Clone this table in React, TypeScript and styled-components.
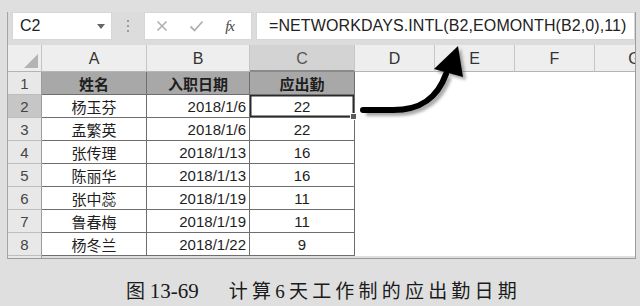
import React from "react";
import styled, { createGlobalStyle } from "styled-components";

const Global = createGlobalStyle`
  html, body { margin: 0; padding: 0; background: #dfdfdf; }
  body { font-family: "Liberation Sans", "Noto Sans CJK SC", sans-serif; }
`;

const Page = styled.div`
  position: relative;
  width: 640px;
  height: 306px;
  box-sizing: border-box;
  padding: 12px 0 0 7px;
  background: #dfdfdf;
  overflow: hidden;
`;

const Panel = styled.div`
  width: 629px;
  box-sizing: border-box;
  border-left: 1px solid #a4a4a4;
  border-right: 1px solid #9c9c9c;
  border-bottom: 1px solid #9a9a9a;
  display: flex;
  flex-direction: column;
  background: #dcdcdc;
`;

const FormulaBar = styled.div`
  display: flex;
  height: 28px;
  padding-left: 4px;
`;

const Box = styled.div<{ $w?: number }>`
  position: relative;
  background: #fff;
  border: 1px solid #d6d6d6;
  box-sizing: border-box;
  display: flex;
  align-items: center;
  ${(p) => (p.$w ? `width: ${p.$w}px;` : "flex: 1; margin-left: 4px;")}
`;

const NameText = styled.span`
  font-size: 16px;
  color: #222;
  padding-left: 7px;
  flex: 1;
`;

const Caret = styled.span`
  width: 0;
  height: 0;
  border-left: 4px solid transparent;
  border-right: 4px solid transparent;
  border-top: 5px solid #666;
  margin-right: 6px;
`;

const Dots = styled.div`
  width: 32px;
  display: flex;
  flex-direction: column;
  align-items: center;
  justify-content: center;
  gap: 3px;
  & > i {
    width: 2px;
    height: 2px;
    background: #9a9a9a;
    display: block;
  }
`;

const FxButtons = styled.div`
  display: flex;
  align-items: center;
  justify-content: space-between;
  width: 100%;
  padding: 0 17px 0 11px;
`;

const FxLabel = styled.span`
  font-family: "Liberation Serif", serif;
  font-style: italic;
  font-size: 15px;
  color: #444;
  letter-spacing: -1px;
`;

const FormulaText = styled.span`
  font-size: 16px;
  color: #222;
  padding-left: 12px;
  white-space: nowrap;
  letter-spacing: 0.1px;
`;

const Spacer = styled.div`
  height: 5px;
`;

const Sheet = styled.div`
  display: grid;
  grid-template-columns: 34px 105px 103px 105px 80px 80px 80px 80px;
  grid-template-rows: 27px repeat(8, 23px) 2px;
  width: 627px;
  overflow: hidden;
  background: #fff;
`;

const Corner = styled.div`
  position: relative;
  background: #eeeeee;
  border-right: 1px solid #c4c4c4;
  border-bottom: 1px solid #b4b4b4;
  &::after {
    content: "";
    position: absolute;
    right: 3px;
    bottom: 3px;
    width: 0;
    height: 0;
    border-left: 14px solid transparent;
    border-bottom: 14px solid #b4b4b4;
  }
`;

const ColHeader = styled.div<{ $active?: boolean }>`
  background: ${(p) => (p.$active ? "#d3d3d3" : "#eeeeee")};
  border-right: 1px solid #c6c6c6;
  border-bottom: ${(p) => (p.$active ? "2px solid #8a8a8a" : "1px solid #b4b4b4")};
  box-sizing: border-box;
  display: flex;
  align-items: center;
  justify-content: center;
  font-size: 16px;
  color: ${(p) => (p.$active ? "#555" : "#333")};
  padding-top: 2px;
`;

const RowHeader = styled.div<{ $active?: boolean }>`
  background: ${(p) => (p.$active ? "#c6c6c6" : "#e8e8e8")};
  border-right: 1px solid #9c9c9c;
  border-bottom: 1px solid #bdbdbd;
  box-sizing: border-box;
  display: flex;
  align-items: center;
  justify-content: center;
  font-size: 15px;
  color: #444;
`;

const Cell = styled.div<{ $align?: "left" | "center" | "right"; $head?: boolean; $selected?: boolean }>`
  position: relative;
  background: ${(p) => (p.$head ? "#a8a8a8" : "#fff")};
  border-right: 1px solid #6e6e6e;
  border-bottom: 1px solid #6e6e6e;
  box-sizing: border-box;
  display: flex;
  align-items: center;
  justify-content: ${(p) =>
    p.$align === "right" ? "flex-end" : p.$align === "left" ? "flex-start" : "center"};
  padding: 0 3px;
  font-size: 15px;
  font-weight: ${(p) => (p.$head ? 700 : 400)};
  color: #1e1e1e;
  ${(p) => (p.$selected ? "box-shadow: inset 0 0 0 1.5px #2a2a2a;" : "")}
`;

const FillHandle = styled.span`
  position: absolute;
  right: -3px;
  bottom: -3px;
  width: 5px;
  height: 5px;
  background: #5a5a5a;
  border: 1px solid #fff;
  z-index: 2;
`;

const Blank = styled.div`
  background: #fff;
`;

const Tail = styled.div<{ $rh?: boolean }>`
  background: ${(p) => (p.$rh ? "#e8e8e8" : "#dedede")};
  ${(p) => (p.$rh ? "border-right: 1px solid #9c9c9c; box-sizing: border-box;" : "")}
`;

const Overlay = styled.svg`
  position: absolute;
  left: 0;
  top: 0;
  pointer-events: none;
`;

const Caption = styled.div`
  margin-top: 20px;
  display: flex;
  align-items: baseline;
  justify-content: center;
  font-family: "Liberation Serif", "Noto Sans CJK SC", serif;
  font-size: 19px;
  line-height: 24px;
  color: #1a1a1a;
  padding-left: 0;
`;

const FigNo = styled.span`
  white-space: pre;
  & > b {
    font-weight: 400;
    font-size: 21px;
  }
`;

const FigTitle = styled.span`
  margin-left: 30px;
  letter-spacing: 4.2px;
`;

const cols = ["A", "B", "C", "D", "E", "F", "G"];
const rows: [string, string, string][] = [
  ["杨玉芬", "2018/1/6", "22"],
  ["孟繁英", "2018/1/6", "22"],
  ["张传理", "2018/1/13", "16"],
  ["陈丽华", "2018/1/13", "16"],
  ["张中蕊", "2018/1/19", "11"],
  ["鲁春梅", "2018/1/19", "11"],
  ["杨冬兰", "2018/1/22", "9"],
];

export default function App() {
  return (
    <Page>
      <Global />
      <Panel>
        <FormulaBar>
          <Box $w={100}>
            <NameText>C2</NameText>
            <Caret />
          </Box>
          <Dots>
            <i />
            <i />
            <i />
          </Dots>
          <Box $w={108}>
            <FxButtons>
              <svg width="12" height="12" viewBox="0 0 12 12">
                <path d="M1.5 1.5 L10.5 10.5 M10.5 1.5 L1.5 10.5" stroke="#b0b0b0" strokeWidth="1.6" />
              </svg>
              <svg width="15" height="12" viewBox="0 0 15 12">
                <path d="M1.5 6.5 L5.5 10.5 L13.5 1.5" stroke="#b0b0b0" strokeWidth="1.8" fill="none" />
              </svg>
              <FxLabel>fx</FxLabel>
            </FxButtons>
          </Box>
          <Box>
            <FormulaText>=NETWORKDAYS.INTL(B2,EOMONTH(B2,0),11)</FormulaText>
          </Box>
        </FormulaBar>
        <Spacer />
        <Sheet>
          <Corner />
          {cols.map((c) => (
            <ColHeader key={c} $active={c === "C"}>
              {c}
            </ColHeader>
          ))}
          <RowHeader>1</RowHeader>
          <Cell $head>姓名</Cell>
          <Cell $head>入职日期</Cell>
          <Cell $head>应出勤</Cell>
          <Blank />
          <Blank />
          <Blank />
          <Blank />
          {rows.map((r, i) => (
            <React.Fragment key={i}>
              <RowHeader $active={i === 0}>{i + 2}</RowHeader>
              <Cell>{r[0]}</Cell>
              <Cell $align="right">{r[1]}</Cell>
              <Cell $selected={i === 0}>
                {r[2]}
                {i === 0 && <FillHandle />}
              </Cell>
              <Blank />
              <Blank />
              <Blank />
              <Blank />
            </React.Fragment>
          ))}
          <Tail $rh />
          <Tail />
          <Tail />
          <Tail />
          <Tail />
          <Tail />
          <Tail />
          <Tail />
        </Sheet>
      </Panel>
      <Caption>
        <FigNo>
          图 <b>13-69</b>
        </FigNo>
        <FigTitle>计算6天工作制的应出勤日期</FigTitle>
      </Caption>
      <Overlay width="640" height="306" viewBox="0 0 640 306">
        <defs>
          <filter id="sh" x="-20%" y="-20%" width="140%" height="140%">
            <feGaussianBlur stdDeviation="1.6" />
          </filter>
        </defs>
        <g transform="translate(3 3)" opacity="0.5" filter="url(#sh)">
          <path d="M363 110 L393 110 C420 110 437 99 446 74" stroke="#555" strokeWidth="6" fill="none" />
          <polygon points="458,46 434,69 463,77" fill="#555" />
        </g>
        <path d="M363 110 L393 110 C420 110 437 99 446 74" stroke="#000" strokeWidth="6" fill="none" strokeLinecap="round" />
        <polygon points="458,46 434,69 463,77" fill="#000" />
      </Overlay>
    </Page>
  );
}
